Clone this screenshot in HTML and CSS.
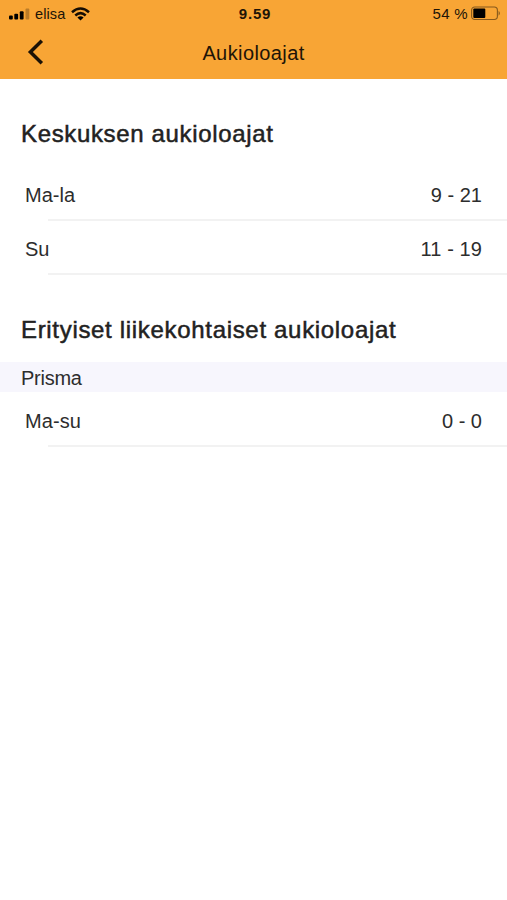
FILE: index.html
```html
<!DOCTYPE html>
<html lang="fi">
<head>
<meta charset="utf-8">
<title>Aukioloajat</title>
<link rel="stylesheet" href="styles.css">
</head>
<body>
<header class="header">
  <div class="status">
    <div class="carrier">
      <svg class="signal" width="21" height="12" viewBox="0 0 21 12"><rect x="0" y="7.500" width="3.800" height="4" rx="1"/><rect x="5.300" y="5.700" width="3.800" height="5.800" rx="1"/><rect x="10.800" y="3.200" width="3.800" height="8.300" rx="1"/><rect x="16.500" y="0.500" width="3.800" height="11" rx="1" opacity=".25"/></svg>
      <span class="operator">elisa</span>
      <svg class="wifi" width="19" height="14" viewBox="0 0 19 14"><g fill="none" stroke="#160d03" stroke-width="2.5"><path d="M1 5.2Q9.500-2.200 18 5.200"/><path d="M4.300 8.500Q9.500 3.700 14.700 8.500"/></g><path d="M6.400 10.500Q9.500 7.900 12.600 10.500L9.500 13.500Z"/></svg>
    </div>
    <span class="clock">9.59</span>
    <div class="power">
      <span class="percent">54 %</span>
      <svg width="30" height="15" viewBox="0 0 30 15"><rect x=".6" y="1" width="25.800" height="12.500" rx="3.200" fill="none" stroke="#160d03" stroke-opacity=".5" stroke-width="1.100"/><rect x="2.300" y="2.600" width="12" height="9.300" rx="1"/><path d="M27.600 4.800Q30 7.200 27.600 9.700Z" opacity=".5"/></svg>
    </div>
  </div>
  <nav class="nav">
    <svg class="back" width="18" height="26" viewBox="0 0 18 26"><path d="M14.800 1.800 3.400 13 14.800 24.200" fill="none" stroke="#1c1206" stroke-width="3.500"/></svg>
    <h1 class="title">Aukioloajat</h1>
  </nav>
</header>
<main>
  <section class="group">
    <h2 class="heading">Keskuksen aukioloajat</h2>
    <div class="row first"><span>Ma-la</span><span>9 - 21</span></div>
    <div class="row"><span>Su</span><span class="wide">11 - 19</span></div>
  </section>
  <section class="group">
    <h2 class="heading second">Erityiset liikekohtaiset aukioloajat</h2>
    <h3 class="store">Prisma</h3>
    <div class="row tall"><span class="wide">Ma-su</span><span>0 - 0</span></div>
  </section>
</main>
</body>
</html>
```
FILE: styles.css
```css
* { box-sizing: border-box; }
body {
  margin: 0;
  min-height: 100vh;
  background: #fff;
  color: #2d2d2d;
  font-family: "Liberation Sans", Arial, sans-serif;
}
svg { display: block; }
h1, h2, h3 { margin: 0; font-weight: 400; }
.header {
  height: 79px;
  background: #f8a535;
  color: #201407;
}
.status {
  display: grid;
  grid-template-columns: 1fr auto 1fr;
  align-items: center;
  height: 27px;
  padding: 0 6px 0 9px;
  font-size: 15px;
}
.carrier, .power { display: flex; align-items: center; }
.power { justify-content: flex-end; gap: 3px; }
.operator { margin: 1px 6px 0 5px; font-size: 14.5px; letter-spacing: 0.1px; }
.percent { letter-spacing: 0.3px; }
.clock { font-weight: 700; letter-spacing: 0.8px; }
.nav {
  display: grid;
  grid-template-columns: 60px 1fr 60px;
  align-items: center;
  height: 50px;
}
.back { margin-left: 26.5px; }
.title {
  padding-top: 2px;
  font-size: 20px;
  line-height: 24px;
  letter-spacing: 0.4px;
  text-align: center;
}
.heading {
  height: 89px;
  padding: 41px 0 0 21px;
  font-size: 24px;
  line-height: 28px;
  letter-spacing: 0.65px;
  -webkit-text-stroke: 0.5px #222;
  color: #222;
  white-space: nowrap;
}
.row {
  display: flex;
  justify-content: space-between;
  height: 54px;
  padding: 16px 25px 0 25px;
  font-size: 20px;
  line-height: 24px;
  background: linear-gradient(#f2f2f2, #f2f2f2) 48px 100% / 100% 2px no-repeat;
}
.first { height: 53px; padding-top: 15px; }
.tall { height: 55px; padding-top: 17px; }
.wide { letter-spacing: 0.1px; }
.second { height: 87px; letter-spacing: 0.68px; }
.store {
  height: 30px;
  padding: 4px 21px;
  background: #f7f6fd;
  font-size: 20px;
  line-height: 24px;
  letter-spacing: -0.25px;
}
```
